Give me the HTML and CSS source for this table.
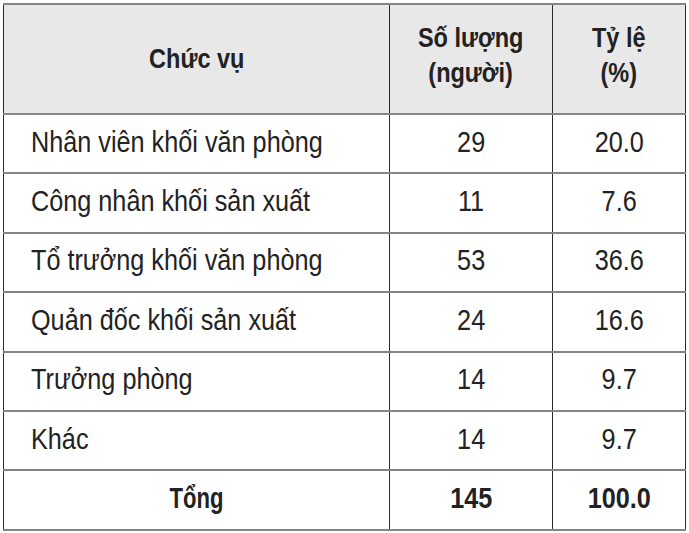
FILE: index.html
```html
<!DOCTYPE html>
<html lang="vi">
<head>
<meta charset="utf-8">
<link rel="stylesheet" href="styles.css">
</head>
<body>
<table class="stats">
  <colgroup>
    <col class="c1"><col class="c2"><col class="c3">
  </colgroup>
  <thead>
    <tr>
      <th><span class="t">Chức vụ</span></th>
      <th class="multi"><span class="t">Số lượng<br>(người)</span></th>
      <th class="multi"><span class="t">Tỷ lệ<br>(%)</span></th>
    </tr>
  </thead>
  <tbody>
    <tr><td class="name"><span class="t">Nhân viên khối văn phòng</span></td><td><span class="t">29</span></td><td><span class="t">20.0</span></td></tr>
    <tr><td class="name"><span class="t">Công nhân khối sản xuất</span></td><td><span class="t">11</span></td><td><span class="t">7.6</span></td></tr>
    <tr><td class="name"><span class="t">Tổ trưởng khối văn phòng</span></td><td><span class="t">53</span></td><td><span class="t">36.6</span></td></tr>
    <tr><td class="name"><span class="t">Quản đốc khối sản xuất</span></td><td><span class="t">24</span></td><td><span class="t">16.6</span></td></tr>
    <tr><td class="name"><span class="t">Trưởng phòng</span></td><td><span class="t">14</span></td><td><span class="t">9.7</span></td></tr>
    <tr><td class="name"><span class="t">Khác</span></td><td><span class="t">14</span></td><td><span class="t">9.7</span></td></tr>
    <tr class="total"><td><span class="t lbl">Tổng</span></td><td><span class="t">145</span></td><td><span class="t">100.0</span></td></tr>
  </tbody>
</table>
</body>
</html>
```
FILE: styles.css
```css
html, body {
  margin: 0;
  padding: 0;
  background: #ffffff;
}
body {
  padding: 3px 0 0 3px;
  font-family: "Liberation Sans", Arial, sans-serif;
  color: #222222;
}
.stats {
  border-collapse: collapse;
  width: 682px;
  table-layout: fixed;
}
.c1 { width: 386px; }
.c2 { width: 163px; }
.c3 { width: 133px; }
.stats thead tr { height: 110px; }
.stats tbody tr { height: 59.4px; }
.stats th,
.stats td {
  border-left: 1.5px solid #2a2a2a;
  border-right: 1.5px solid #2a2a2a;
  border-top: 2px solid #858585;
  border-bottom: 2px solid #858585;
  text-align: center;
  vertical-align: middle;
  padding: 0 0 3px 0;
  font-size: 29px;
  font-weight: normal;
}
.stats th {
  background: #e8e8e8;
  font-size: 27px;
  font-weight: bold;
  line-height: 35px;
  padding: 0;
}
.stats th.multi {
  padding-bottom: 7px;
}
.t {
  display: inline-block;
  white-space: nowrap;
  transform: scaleX(0.87);
  transform-origin: center;
}
.t.lbl {
  transform: scaleX(0.76);
}
.stats td.name {
  text-align: left;
  padding-left: 27px;
}
.stats td.name .t {
  transform-origin: left center;
}
.stats .total td {
  font-weight: bold;
}
```
